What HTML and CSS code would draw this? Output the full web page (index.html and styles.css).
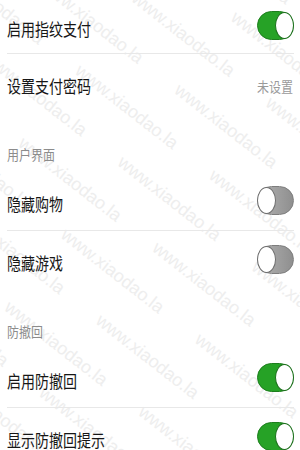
FILE: index.html
```html
<!DOCTYPE html>
<html lang="zh-CN">
<head>
<meta charset="utf-8">
<title>设置</title>
<link rel="stylesheet" href="styles.css">
</head>
<body>
<div class="page">
  <div class="list">
    <div class="row first bordered">
      <span class="label">启用指纹支付</span>
      <span class="switch on"><span class="knob"></span></span>
    </div>
    <div class="row">
      <span class="label">设置支付密码</span>
      <span class="value">未设置</span>
    </div>
    <div class="header"><span class="header-text">用户界面</span></div>
    <div class="row bordered">
      <span class="label">隐藏购物</span>
      <span class="switch off"><span class="knob"></span></span>
    </div>
    <div class="row">
      <span class="label">隐藏游戏</span>
      <span class="switch off"><span class="knob"></span></span>
    </div>
    <div class="header"><span class="header-text">防撤回</span></div>
    <div class="row bordered">
      <span class="label">启用防撤回</span>
      <span class="switch on"><span class="knob"></span></span>
    </div>
    <div class="row">
      <span class="label">显示防撤回提示</span>
      <span class="switch on"><span class="knob"></span></span>
    </div>
  </div>
  <div class="watermark" aria-hidden="true">
    <div class="wm-line">www.xiaodao.la www.xiaodao.la www.xiaodao.la www.xiaodao.la</div>
    <div class="wm-line shift">www.xiaodao.la www.xiaodao.la www.xiaodao.la www.xiaodao.la</div>
    <div class="wm-line">www.xiaodao.la www.xiaodao.la www.xiaodao.la www.xiaodao.la</div>
    <div class="wm-line shift">www.xiaodao.la www.xiaodao.la www.xiaodao.la www.xiaodao.la</div>
    <div class="wm-line">www.xiaodao.la www.xiaodao.la www.xiaodao.la www.xiaodao.la</div>
    <div class="wm-line shift">www.xiaodao.la www.xiaodao.la www.xiaodao.la www.xiaodao.la</div>
    <div class="wm-line">www.xiaodao.la www.xiaodao.la www.xiaodao.la www.xiaodao.la</div>
    <div class="wm-line shift">www.xiaodao.la www.xiaodao.la www.xiaodao.la www.xiaodao.la</div>
    <div class="wm-line">www.xiaodao.la www.xiaodao.la www.xiaodao.la www.xiaodao.la</div>
    <div class="wm-line shift">www.xiaodao.la www.xiaodao.la www.xiaodao.la www.xiaodao.la</div>
    <div class="wm-line">www.xiaodao.la www.xiaodao.la www.xiaodao.la www.xiaodao.la</div>
    <div class="wm-line shift">www.xiaodao.la www.xiaodao.la www.xiaodao.la www.xiaodao.la</div>
    <div class="wm-line">www.xiaodao.la www.xiaodao.la www.xiaodao.la www.xiaodao.la</div>
    <div class="wm-line shift">www.xiaodao.la www.xiaodao.la www.xiaodao.la www.xiaodao.la</div>
    <div class="wm-line">www.xiaodao.la www.xiaodao.la www.xiaodao.la www.xiaodao.la</div>
    <div class="wm-line shift">www.xiaodao.la www.xiaodao.la www.xiaodao.la www.xiaodao.la</div>
    <div class="wm-line">www.xiaodao.la www.xiaodao.la www.xiaodao.la www.xiaodao.la</div>
    <div class="wm-line shift">www.xiaodao.la www.xiaodao.la www.xiaodao.la www.xiaodao.la</div>
  </div>
</div>
</body>
</html>
```
FILE: styles.css
```css
html, body {
  margin: 0;
  padding: 0;
  background: #ffffff;
}
body {
  font-family: "Noto Sans CJK SC", "Noto Sans", sans-serif;
  width: 300px;
  height: 450px;
  overflow: hidden;
}
.page {
  position: relative;
  width: 300px;
  height: 450px;
  overflow: hidden;
}
.list {
  position: relative;
  z-index: 2;
}
.row {
  height: 59px;
  box-sizing: border-box;
  margin: 0 6px 0 7px;
  display: flex;
  align-items: center;
  justify-content: space-between;
}
.row.first {
  height: 54px;
}
.row.bordered {
  border-bottom: 1px solid #e8e8e8;
}
.label {
  display: inline-block;
  font-size: 14px;
  line-height: 16px;
  color: #161616;
  transform: scaleY(1.25);
  padding-top: 3px;
}
.row.first .label {
  padding-top: 2px;
}
.value {
  display: inline-block;
  font-size: 12px;
  line-height: 14px;
  color: #9a9a9a;
  transform: scaleY(1.15);
  padding-top: 5px;
  margin-right: 1px;
}
.header {
  height: 59px;
  box-sizing: border-box;
  padding: 0 0 10px 7px;
  display: flex;
  align-items: flex-end;
}
.header-text {
  display: inline-block;
  font-size: 12px;
  line-height: 16px;
  color: #8c8c8c;
  transform: scaleY(1.15);
}
.switch {
  width: 37px;
  height: 29px;
  box-sizing: border-box;
  border-radius: 15px;
  display: flex;
  align-items: center;
  flex: none;
  margin-top: -2px;
}
.switch .knob {
  width: 19px;
  height: 27px;
  box-sizing: border-box;
  border-radius: 50%;
  background: #ffffff;
}
.switch.on {
  background: #26a226;
  border: 1px solid #1d7e1d;
  justify-content: flex-end;
}
.switch.on .knob {
  border: 1.5px solid #1a6e1a;
  margin-right: -1px;
}
.switch.off {
  background: linear-gradient(90deg, #b3b3b3, #8f8f8f);
  border: 1px solid #7d7d7d;
  justify-content: flex-start;
}
.switch.off .knob {
  border: 1.5px solid #6d6d6d;
  margin-left: -1px;
}
.watermark {
  position: absolute;
  z-index: 1;
  left: -300px;
  top: -260px;
  width: 900px;
  transform: rotate(38deg);
  transform-origin: 50% 50%;
  pointer-events: none;
}
.wm-line {
  font-family: "Liberation Sans", sans-serif;
  font-size: 18px;
  line-height: 46px;
  color: #eeeeee;
  white-space: nowrap;
  word-spacing: 40px;
}
.wm-line.shift {
  padding-left: 90px;
}
```
